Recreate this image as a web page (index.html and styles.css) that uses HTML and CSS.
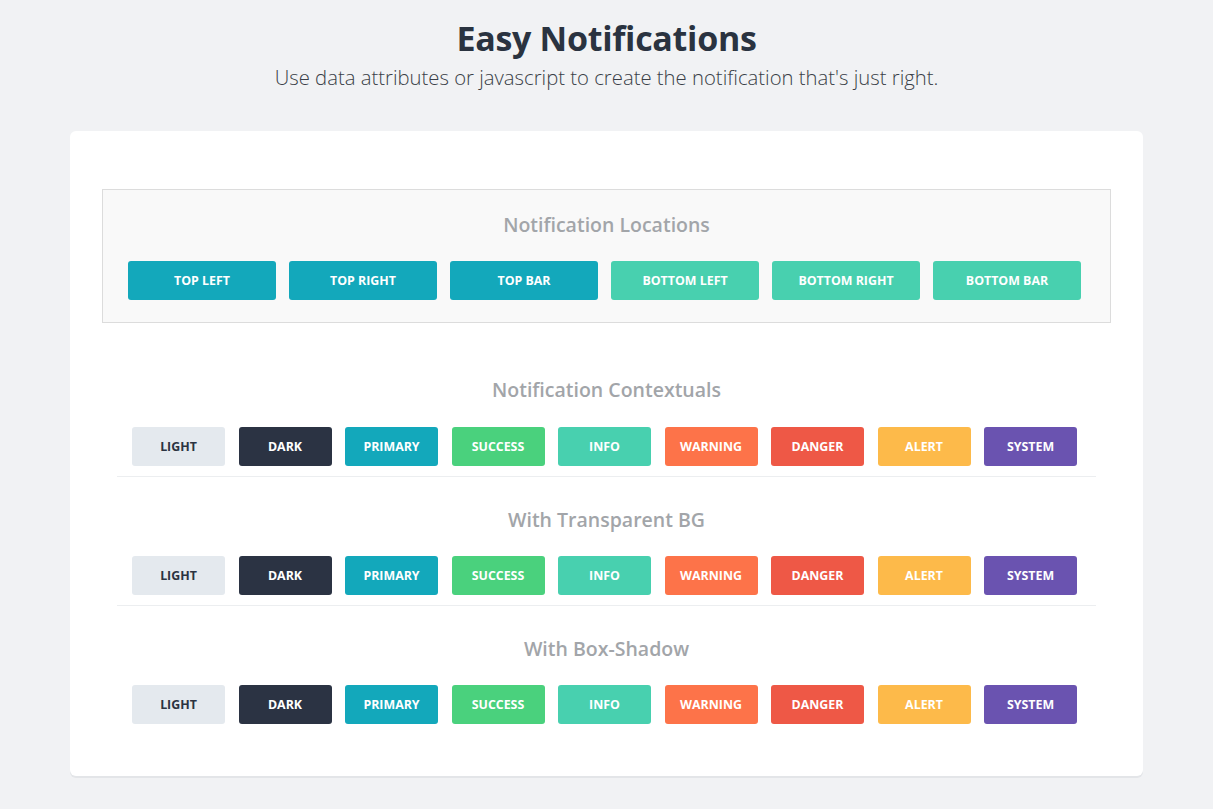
FILE: index.html
```html
<!DOCTYPE html>
<html lang="en">
<head>
<meta charset="utf-8">
<title>Easy Notifications</title>
<link rel="stylesheet" href="styles.css">
</head>
<body>
<header class="hero">
  <h1 class="hero-title">Easy Notifications</h1>
  <p class="hero-sub">Use data attributes or javascript to create the notification that's just right.</p>
</header>
<main class="card">
  <section class="locations">
    <h2 class="sec-title">Notification Locations</h2>
    <div class="row loc-row">
      <button class="btn loc btn-primary">Top Left</button>
      <button class="btn loc btn-primary">Top Right</button>
      <button class="btn loc btn-primary">Top Bar</button>
      <button class="btn loc btn-info">Bottom Left</button>
      <button class="btn loc btn-info">Bottom Right</button>
      <button class="btn loc btn-info">Bottom Bar</button>
    </div>
  </section>

  <section class="ctx first">
    <h2 class="sec-title">Notification Contextuals</h2>
    <div class="row ctx-row">
      <button class="btn ctxb btn-light">Light</button>
      <button class="btn ctxb btn-dark">Dark</button>
      <button class="btn ctxb btn-primary">Primary</button>
      <button class="btn ctxb btn-success">Success</button>
      <button class="btn ctxb btn-info">Info</button>
      <button class="btn ctxb btn-warning">Warning</button>
      <button class="btn ctxb btn-danger">Danger</button>
      <button class="btn ctxb btn-alert">Alert</button>
      <button class="btn ctxb btn-system">System</button>
    </div>
  </section>

  <section class="ctx">
    <h2 class="sec-title">With Transparent BG</h2>
    <div class="row ctx-row">
      <button class="btn ctxb btn-light">Light</button>
      <button class="btn ctxb btn-dark">Dark</button>
      <button class="btn ctxb btn-primary">Primary</button>
      <button class="btn ctxb btn-success">Success</button>
      <button class="btn ctxb btn-info">Info</button>
      <button class="btn ctxb btn-warning">Warning</button>
      <button class="btn ctxb btn-danger">Danger</button>
      <button class="btn ctxb btn-alert">Alert</button>
      <button class="btn ctxb btn-system">System</button>
    </div>
  </section>

  <section class="ctx last">
    <h2 class="sec-title">With Box-Shadow</h2>
    <div class="row ctx-row">
      <button class="btn ctxb btn-light">Light</button>
      <button class="btn ctxb btn-dark">Dark</button>
      <button class="btn ctxb btn-primary">Primary</button>
      <button class="btn ctxb btn-success">Success</button>
      <button class="btn ctxb btn-info">Info</button>
      <button class="btn ctxb btn-warning">Warning</button>
      <button class="btn ctxb btn-danger">Danger</button>
      <button class="btn ctxb btn-alert">Alert</button>
      <button class="btn ctxb btn-system">System</button>
    </div>
  </section>
</main>
</body>
</html>
```

FILE: styles.css
```css
* { box-sizing: border-box; }
html, body { margin: 0; padding: 0; }
body {
  background: #f1f2f4;
  font-family: "Open Sans", "Noto Sans", sans-serif;
  color: #2a3340;
  padding: 14px 0 32px;
}
.hero { text-align: center; }
.hero-title {
  margin: 0;
  font-size: 34px;
  line-height: 48px;
  font-weight: 700;
  color: #2a3340;
  letter-spacing: -0.3px;
}
.hero-sub {
  margin: 0;
  font-size: 20.3px;
  line-height: 30px;
  font-weight: 300;
  color: #3a3f47;
}
.card {
  width: 1073px;
  margin: 39px auto 0;
  background: #fff;
  border-radius: 6px;
  box-shadow: 0 2px 0 #e3e5e8;
  padding: 58px 32px 52px;
}
.locations {
  background: #f9f9f9;
  border: 1px solid #dcdcdc;
  padding: 23px 0 22px;
}
.sec-title {
  margin: 0 0 24px;
  text-align: center;
  font-size: 19.5px;
  line-height: 24px;
  font-weight: 600;
  color: #a2a5a9;
}
.row {
  display: flex;
  justify-content: center;
  padding-right: 4px;
}
.loc-row { gap: 13px; }
.ctx-row { gap: 13.5px; }
.btn {
  border: 0;
  border-radius: 3px;
  height: 39px;
  padding: 0;
  font-family: "Open Sans", "Noto Sans", sans-serif;
  font-size: 12.4px;
  font-weight: 700;
  text-transform: uppercase;
  color: #fff;
  cursor: pointer;
}
.loc { width: 148px; }
.ctxb { width: 93px; }
.btn-primary { background: #13a8bb; }
.btn-info { background: #48d0af; }
.btn-light { background: #e4e9ee; color: #2b3341; }
.btn-dark { background: #2b3343; }
.btn-success { background: #4ad17d; }
.btn-warning { background: #fd7349; }
.btn-danger { background: #ee5846; }
.btn-alert { background: #fdba4a; }
.btn-system { background: #6a53b0; }

.ctx {
  margin: 0 15px;
  padding-bottom: 10px;
  border-bottom: 1px solid #eceef0;
}
.ctx.first { margin-top: 55px; }
.ctx + .ctx { padding-top: 31px; }
.ctx.last { border-bottom: 0; padding-bottom: 0; }
.ctx .sec-title { margin-bottom: 25px; }
.ctx + .ctx .sec-title { margin-bottom: 24px; }
```
